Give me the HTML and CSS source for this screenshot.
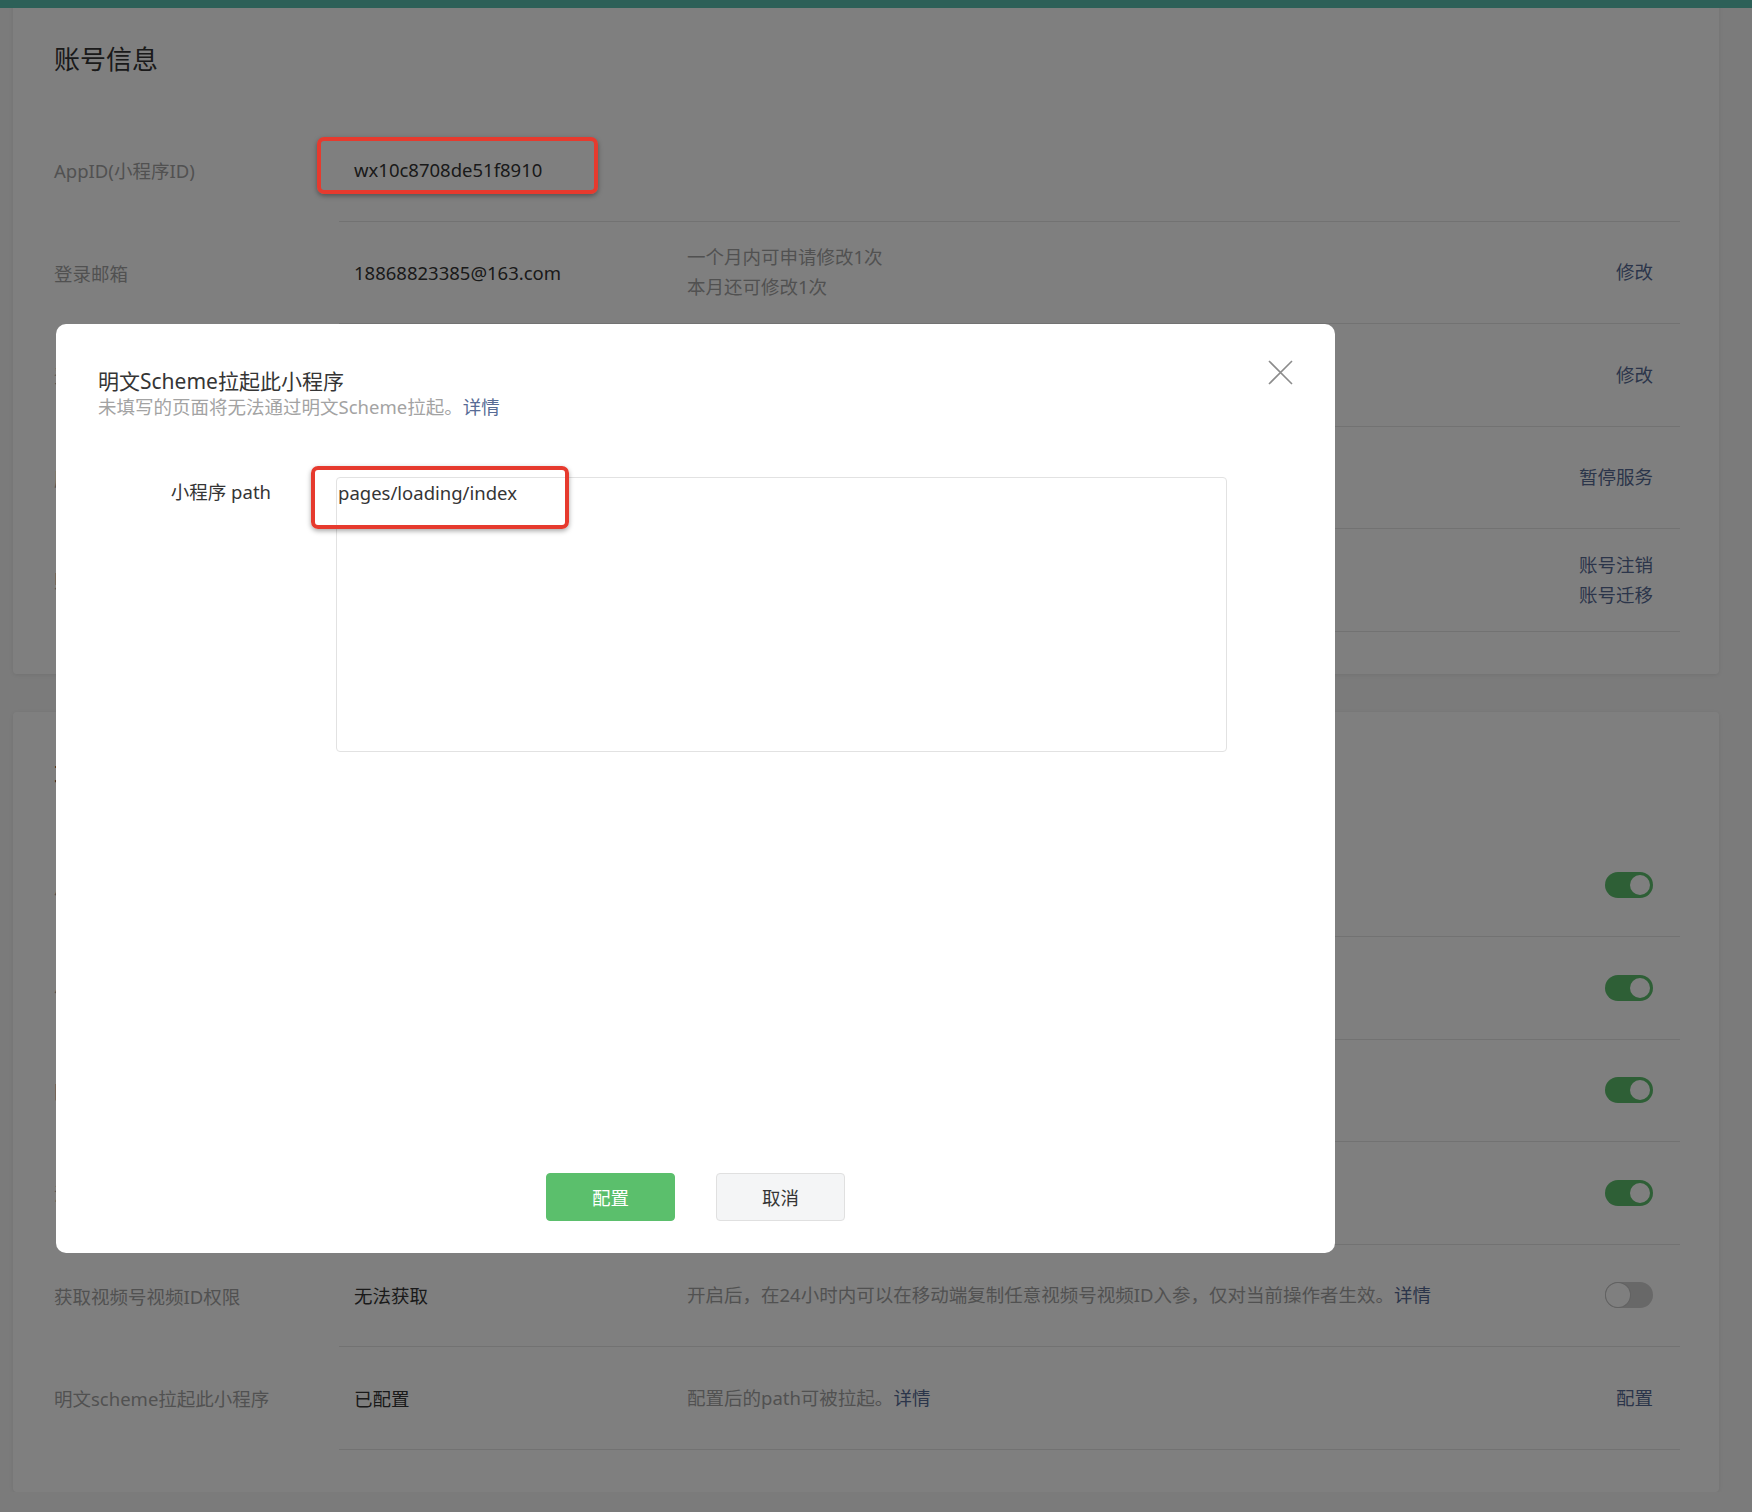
FILE: index.html
```html
<!DOCTYPE html>
<html lang="zh-CN">
<head>
    <meta charset="UTF-8">
    <meta name="viewport" content="width=device-width, initial-scale=1.0">
    <title>基本设置</title>
    <link rel="stylesheet" href="styles.css">
</head>
<body>
    <div class="topbar"></div>

    <div class="page">
        <div class="card">
            <h2 class="card-title">账号信息</h2>

            <div class="row">
                <div class="row-label">AppID(小程序ID)</div>
                <div class="row-body">
                    <div class="row-value"><span class="value-text">wx10c8708de51f8910<span class="mark mark-appid"></span></span></div>
                    <div class="row-desc"></div>
                    <div class="row-action"></div>
                </div>
            </div>
            <div class="row">
                <div class="row-label">登录邮箱</div>
                <div class="row-body">
                    <div class="row-value">18868823385@163.com</div>
                    <div class="row-desc">一个月内可申请修改1次<br>本月还可修改1次</div>
                    <div class="row-action"><a href="#">修改</a></div>
                </div>
            </div>
            <div class="row">
                <div class="row-label">登录密码</div>
                <div class="row-body">
                    <div class="row-value"></div>
                    <div class="row-desc"></div>
                    <div class="row-action"><a href="#">修改</a></div>
                </div>
            </div>
            <div class="row">
                <div class="row-label">服务状态</div>
                <div class="row-body">
                    <div class="row-value"></div>
                    <div class="row-desc"></div>
                    <div class="row-action"><a href="#">暂停服务</a></div>
                </div>
            </div>
            <div class="row">
                <div class="row-label">账号状态</div>
                <div class="row-body">
                    <div class="row-value"></div>
                    <div class="row-desc"></div>
                    <div class="row-action"><a href="#">账号注销</a><br><a href="#">账号迁移</a></div>
                </div>
            </div>
        </div>

        <div class="card">
            <h2 class="card-title">功能设置</h2>

            <div class="row">
                <div class="row-label">用户搜索</div>
                <div class="row-body">
                    <div class="row-value"></div>
                    <div class="row-desc"></div>
                    <div class="row-action"><span class="switch on"></span></div>
                </div>
            </div>
            <div class="row">
                <div class="row-label">小程序分享</div>
                <div class="row-body">
                    <div class="row-value"></div>
                    <div class="row-desc"></div>
                    <div class="row-action"><span class="switch on"></span></div>
                </div>
            </div>
            <div class="row">
                <div class="row-label">附近的小程序</div>
                <div class="row-body">
                    <div class="row-value"></div>
                    <div class="row-desc"></div>
                    <div class="row-action"><span class="switch on"></span></div>
                </div>
            </div>
            <div class="row">
                <div class="row-label">消息推送</div>
                <div class="row-body">
                    <div class="row-value"></div>
                    <div class="row-desc"></div>
                    <div class="row-action"><span class="switch on"></span></div>
                </div>
            </div>
            <div class="row">
                <div class="row-label">获取视频号视频ID权限</div>
                <div class="row-body">
                    <div class="row-value">无法获取</div>
                    <div class="row-desc">开启后，在24小时内可以在移动端复制任意视频号视频ID入参，仅对当前操作者生效。<a href="#">详情</a></div>
                    <div class="row-action"><span class="switch"></span></div>
                </div>
            </div>
            <div class="row">
                <div class="row-label">明文scheme拉起此小程序</div>
                <div class="row-body">
                    <div class="row-value">已配置</div>
                    <div class="row-desc">配置后的path可被拉起。<a href="#">详情</a></div>
                    <div class="row-action"><a href="#">配置</a></div>
                </div>
            </div>
        </div>
    </div>

    <div class="mask"></div>

    <div class="dialog">
        <button class="dialog-close" type="button">
            <svg width="25" height="25" viewBox="0 0 25 25"><path d="M1 1L24 24M24 1L1 24" stroke="#8c8c8c" stroke-width="1.6" fill="none"/></svg>
        </button>
        <div class="dialog-title">明文Scheme拉起此小程序</div>
        <div class="dialog-desc">未填写的页面将无法通过明文Scheme拉起。<a href="#">详情</a></div>

        <div class="form-row">
            <label class="form-label" for="path">小程序 path</label>
            <div class="form-field">
                <textarea id="path">pages/loading/index</textarea>
                <span class="mark mark-path"></span>
            </div>
        </div>

        <div class="dialog-footer">
            <button class="btn btn-primary" type="button">配置</button>
            <button class="btn btn-default" type="button">取消</button>
        </div>
    </div>
</body>
</html>
```

FILE: styles.css
```css
* {
    box-sizing: border-box;
}
body {
    margin: 0;
    background-color: #f6f6f6;
    color: #353535;
    font-family: "Noto Sans", "Noto Sans CJK SC", sans-serif;
    font-size: 18.5px;
    overflow: hidden;
}
a {
    color: #576b95;
    text-decoration: none;
}

.topbar {
    position: relative;
    z-index: 1;
    height: 8px;
    background-color: #5ac0b0;
}

.page {
    padding: 0 33px 0 13px;
}
.card {
    background-color: #fff;
    border-radius: 4px;
    box-shadow: 0 1px 4px rgba(0, 0, 0, 0.08);
    padding: 45px 39px 42px 41px;
}
.card:first-child {
    margin-top: -12px;
}
.card + .card {
    margin-top: 38px;
}
.card-title {
    margin: 0 0 42px;
    font-size: 26px;
    font-weight: normal;
    line-height: 36px;
    color: #353535;
}

.row {
    display: flex;
}
.row-label {
    width: 285px;
    flex: none;
    display: flex;
    align-items: center;
    color: #a3a3a3;
}
.row-body {
    flex: 1;
    display: flex;
    align-items: center;
    min-height: 102.5px;
    border-bottom: 1px solid #e4e4e4;
    padding: 0 27px 0 15px;
}
.row-value {
    width: 333px;
    flex: none;
}
.value-text {
    position: relative;
}
.row-desc {
    flex: 1;
    color: #a3a3a3;
    line-height: 30px;
}
.row-action {
    text-align: right;
    line-height: 30px;
}

.switch {
    display: block;
    position: relative;
    width: 48px;
    height: 26px;
    border-radius: 13px;
    background-color: #d0d0d0;
}
.switch::after {
    content: "";
    position: absolute;
    top: 1px;
    left: 1px;
    width: 24px;
    height: 24px;
    border-radius: 50%;
    background-color: #fff;
    box-shadow: 0 0 0 1px #c4c4c4;
}
.switch.on {
    background-color: #5cbf6d;
}
.switch.on::after {
    left: auto;
    right: 3px;
    top: 3px;
    width: 20px;
    height: 20px;
    box-shadow: none;
}

/* dialog */
.mask {
    position: fixed;
    top: 0;
    left: 0;
    right: 0;
    bottom: 0;
    z-index: 10;
    background-color: rgba(0, 0, 0, 0.5);
}
.dialog {
    position: fixed;
    top: 324px;
    left: 56px;
    z-index: 20;
    width: 1279px;
    height: 929px;
    display: flex;
    flex-direction: column;
    padding: 43px 42px 32px;
    background-color: #fff;
    border-radius: 10px;
}
.dialog-close {
    position: absolute;
    top: 36px;
    right: 42px;
    padding: 0;
    border: none;
    background: none;
    line-height: 0;
}
.dialog-title {
    font-size: 21px;
    line-height: 28px;
    color: #353535;
}
.dialog-desc {
    line-height: 24px;
    color: #a3a3a3;
}
.form-row {
    display: flex;
    margin-top: 58px;
}
.form-label {
    width: 173px;
    margin-right: 65px;
    text-align: right;
    line-height: 30px;
}
.form-field {
    position: relative;
}
.form-field textarea {
    display: block;
    width: 891px;
    height: 275px;
    padding: 2px 1px;
    border: 1px solid #e2e2e2;
    border-radius: 4px;
    font: inherit;
    line-height: 26px;
    color: #353535;
    resize: none;
    outline: none;
}
.dialog-footer {
    margin-top: auto;
    display: flex;
    justify-content: center;
    gap: 41px;
}
.btn {
    width: 129px;
    height: 48px;
    border-radius: 4px;
    font: inherit;
    cursor: pointer;
}
.btn-primary {
    background-color: #5bbf6c;
    border: 1px solid #5bbf6c;
    color: #fff;
}
.btn-default {
    background-color: #f4f5f6;
    border: 1px solid #e0e0e0;
    color: #353535;
}

/* red annotation boxes */
.mark {
    position: absolute;
    z-index: 30;
    border: 4px solid #e63a2e;
    border-radius: 7px;
    box-shadow: 0 2px 5px rgba(0, 0, 0, 0.35);
    pointer-events: none;
}
.mark-appid {
    left: -37px;
    top: -20px;
    width: 281px;
    height: 57px;
}
.mark-path {
    left: -25px;
    top: -11px;
    width: 258px;
    height: 63px;
}
```
